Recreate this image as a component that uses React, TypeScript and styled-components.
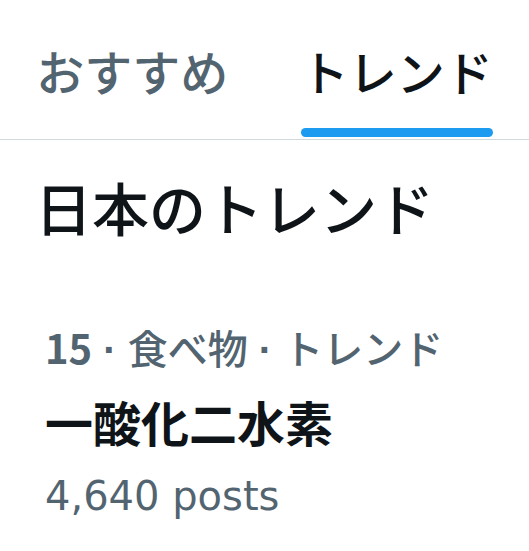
import React from 'react'
import styled, { createGlobalStyle } from 'styled-components'

const GlobalStyle = createGlobalStyle`
    html, body {
        margin: 0;
        padding: 0;
        background: #ffffff;
    }
    body {
        font-family: "Noto Sans CJK JP", sans-serif;
        color: #0f1419;
    }
`

const medium = `"Noto Sans CJK JP Medium", "Noto Sans CJK JP", sans-serif`

const Page = styled.div`
    width: 529px;
    display: flex;
    flex-direction: column;
`

const TabBar = styled.nav`
    display: flex;
    height: 139px;
    border-bottom: 1px solid #cfd9de;
`

const Tab = styled.div<{ $active?: boolean }>`
    flex: 1;
    display: flex;
    flex-direction: column;
    align-items: center;
    justify-content: space-between;
    padding-top: 40px;
    padding-bottom: 2px;
    font-family: ${medium};
    font-size: 48px;
    font-weight: 400;
    line-height: 60px;
    color: ${p => (p.$active ? '#0f1419' : '#536471')};
`

const Indicator = styled.div<{ $show?: boolean }>`
    width: 192px;
    height: 9px;
    border-radius: 9px;
    background: ${p => (p.$show ? '#1d9bf0' : 'transparent')};
`

const Heading = styled.h2`
    margin: 0;
    padding: 30px 0 0 35px;
    font-family: ${medium};
    font-weight: 400;
    font-size: 57px;
    line-height: 72px;
    color: #0f1419;
`

const Trend = styled.div`
    display: flex;
    flex-direction: column;
    padding: 80px 0 0 45px;
`

const Meta = styled.div`
    font-family: ${medium};
    font-size: 40px;
    line-height: 50px;
    color: #536471;
    white-space: nowrap;
`

const Rank = styled.span`
    font-family: "Noto Sans CJK JP", sans-serif;
    font-weight: 700;
`

const Sep = styled.span`
    font-family: "Liberation Sans", sans-serif;
    font-weight: 700;
`

const Name = styled.div`
    margin-top: 16px;
    font-weight: 700;
    font-size: 48px;
    line-height: 60px;
    color: #0f1419;
`

const Posts = styled.div`
    margin-top: 20px;
    font-family: "DejaVu Sans", sans-serif;
    font-size: 40px;
    line-height: 50px;
    color: #536471;
`

export default function App() {
    return (
        <Page>
            <GlobalStyle />
            <TabBar>
                <Tab>
                    <span>おすすめ</span>
                    <Indicator />
                </Tab>
                <Tab $active>
                    <span>トレンド</span>
                    <Indicator $show />
                </Tab>
            </TabBar>
            <Heading>日本のトレンド</Heading>
            <Trend>
                <Meta>
                    <Rank>15</Rank>
                    <Sep> · </Sep>
                    食べ物
                    <Sep> · </Sep>
                    トレンド
                </Meta>
                <Name>一酸化二水素</Name>
                <Posts>4,640 posts</Posts>
            </Trend>
        </Page>
    )
}
